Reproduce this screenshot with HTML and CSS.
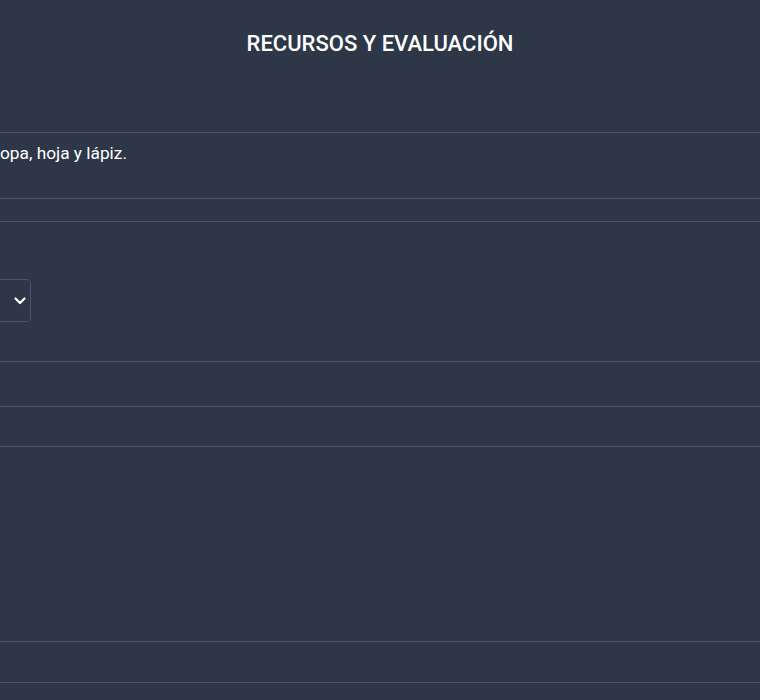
FILE: index.html
```html
<!DOCTYPE html>
<html lang="es">
<head>
<meta charset="utf-8">
<title>Recursos y evaluación</title>
<link rel="stylesheet" href="styles.css">
</head>
<body>
<main class="panel">
  <header class="panel-head">
    <h2 class="panel-title">RECURSOS Y EVALUACIÓN</h2>
  </header>
  <div class="row row-text">
    <p class="cell-text">opa, hoja y lápiz.</p>
  </div>
  <div class="row row-empty-sm"></div>
  <div class="row row-select">
    <div class="select-box">
      <svg class="chev" width="12" height="8" viewBox="0 0 12 8" aria-hidden="true">
        <path d="M1.5 1.5 L6 6 L10.5 1.5" fill="none" stroke="#ffffff" stroke-width="2.2" stroke-linecap="round" stroke-linejoin="round"/>
      </svg>
    </div>
  </div>
  <div class="row row-a"></div>
  <div class="row row-b"></div>
  <div class="row row-c"></div>
  <div class="row row-d"></div>
  <div class="row row-e"></div>
</main>
</body>
</html>
```
FILE: styles.css
```css
html, body {
  margin: 0;
  padding: 0;
  background: #2d3748;
}
body {
  font-family: Roboto, "Liberation Sans", sans-serif;
  color: #f7fafc;
  overflow: hidden;
  height: 700px;
}
.panel {
  display: flex;
  flex-direction: column;
}
.panel-head {
  height: 133px;
  border-bottom: 1px solid #4a5568;
  box-sizing: border-box;
  padding-top: 30px;
}
.panel-title {
  margin: 0;
  text-align: center;
  font-size: 22px;
  font-weight: 500;
  line-height: 28px;
  color: #ffffff;
}
.row {
  border-bottom: 1px solid #4a5568;
  box-sizing: border-box;
}
.row-text {
  height: 66px;
  padding-top: 8px;
}
.cell-text {
  margin: 0;
  font-size: 17.3px;
  line-height: 24px;
  color: #ffffff;
}
.row-empty-sm { height: 23px; }
.row-select {
  height: 140px;
  padding-top: 57px;
}
.select-box {
  width: 31px;
  height: 43px;
  box-sizing: border-box;
  border: 1px solid #4a5568;
  border-left: none;
  border-radius: 0 5px 5px 0;
  display: flex;
  align-items: center;
  justify-content: flex-end;
  padding-right: 4px;
}
.chev { display: block; }
.row-a { height: 45px; }
.row-b { height: 40px; }
.row-c { height: 195px; }
.row-d { height: 41px; }
.row-e { height: 60px; border-bottom: none; }
```
